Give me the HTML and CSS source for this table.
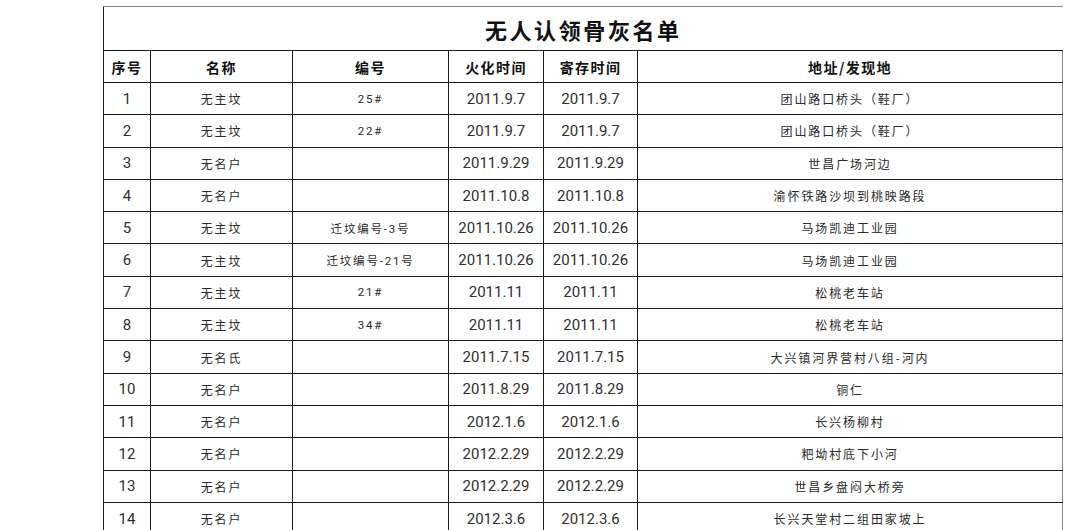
FILE: index.html
```html
<!DOCTYPE html>
<html lang="zh">
<head>
<meta charset="utf-8">
<title>无人认领骨灰名单</title>
<link rel="stylesheet" href="styles.css">
</head>
<body>
<div class="page">
<table class="sheet">
<colgroup>
<col class="c1"><col class="c2"><col class="c3"><col class="c4"><col class="c5"><col class="c6">
</colgroup>
<thead>
<tr class="title-row"><th colspan="6" class="title">无人认领骨灰名单</th></tr>
<tr class="head-row"><th>序号</th><th>名称</th><th>编号</th><th>火化时间</th><th>寄存时间</th><th>地址/发现地</th></tr>
</thead>
<tbody>
<tr><td class="num">1</td><td class="cn">无主坟</td><td class="code">25#</td><td class="num">2011.9.7</td><td class="num">2011.9.7</td><td class="cn">团山路口桥头（鞋厂）</td></tr>
<tr><td class="num">2</td><td class="cn">无主坟</td><td class="code">22#</td><td class="num">2011.9.7</td><td class="num">2011.9.7</td><td class="cn">团山路口桥头（鞋厂）</td></tr>
<tr><td class="num">3</td><td class="cn">无名户</td><td class="code"></td><td class="num">2011.9.29</td><td class="num">2011.9.29</td><td class="cn">世昌广场河边</td></tr>
<tr><td class="num">4</td><td class="cn">无名户</td><td class="code"></td><td class="num">2011.10.8</td><td class="num">2011.10.8</td><td class="cn">渝怀铁路沙坝到桃映路段</td></tr>
<tr><td class="num">5</td><td class="cn">无主坟</td><td class="code">迁坟编号-3号</td><td class="num">2011.10.26</td><td class="num">2011.10.26</td><td class="cn">马场凯迪工业园</td></tr>
<tr><td class="num">6</td><td class="cn">无主坟</td><td class="code">迁坟编号-21号</td><td class="num">2011.10.26</td><td class="num">2011.10.26</td><td class="cn">马场凯迪工业园</td></tr>
<tr><td class="num">7</td><td class="cn">无主坟</td><td class="code">21#</td><td class="num">2011.11</td><td class="num">2011.11</td><td class="cn">松桃老车站</td></tr>
<tr><td class="num">8</td><td class="cn">无主坟</td><td class="code">34#</td><td class="num">2011.11</td><td class="num">2011.11</td><td class="cn">松桃老车站</td></tr>
<tr><td class="num">9</td><td class="cn">无名氏</td><td class="code"></td><td class="num">2011.7.15</td><td class="num">2011.7.15</td><td class="cn">大兴镇河界营村八组-河内</td></tr>
<tr><td class="num">10</td><td class="cn">无名户</td><td class="code"></td><td class="num">2011.8.29</td><td class="num">2011.8.29</td><td class="cn">铜仁</td></tr>
<tr><td class="num">11</td><td class="cn">无名户</td><td class="code"></td><td class="num">2012.1.6</td><td class="num">2012.1.6</td><td class="cn">长兴杨柳村</td></tr>
<tr><td class="num">12</td><td class="cn">无名户</td><td class="code"></td><td class="num">2012.2.29</td><td class="num">2012.2.29</td><td class="cn">粑坳村底下小河</td></tr>
<tr><td class="num">13</td><td class="cn">无名户</td><td class="code"></td><td class="num">2012.2.29</td><td class="num">2012.2.29</td><td class="cn">世昌乡盘闷大桥旁</td></tr>
<tr><td class="num">14</td><td class="cn">无名户</td><td class="code"></td><td class="num">2012.3.6</td><td class="num">2012.3.6</td><td class="cn">长兴天堂村二组田家坡上</td></tr>
</tbody>
</table>
</div>
</body>
</html>
```
FILE: styles.css
```css
html, body {
  margin: 0;
  padding: 0;
  background: #ffffff;
}
.page {
  padding: 6px 0 0 103px;
}
.sheet {
  border-collapse: collapse;
  table-layout: fixed;
  width: 959px;
  color: #1c1c1c;
  font-family: Roboto, "Noto Sans CJK SC", sans-serif;
}
.c1 { width: 47px; }
.c2 { width: 142px; }
.c3 { width: 156px; }
.c4 { width: 95px; }
.c5 { width: 94px; }
.c6 { width: 425px; }
.sheet th, .sheet td {
  border: 1px solid #1a1a1a;
  padding: 0;
  text-align: center;
  vertical-align: middle;
  white-space: nowrap;
  overflow: hidden;
}
.sheet td:last-child, .sheet th:last-child {
  border-right-color: #8a8a8a;
}
.title-row th.title {
  height: 43px;
  border-top: 1px solid #8a8a8a;
  border-right: none;
  font-family: "Noto Sans CJK SC", sans-serif;
  font-size: 22px;
  font-weight: 700;
  letter-spacing: 2.6px;
  color: #111;
}
.head-row th {
  height: 31px;
  font-family: "Noto Sans CJK SC", sans-serif;
  font-size: 14px;
  font-weight: 700;
  letter-spacing: 1.4px;
  color: #111;
}
.sheet tbody td {
  height: 31.3px;
}
.num {
  font-family: Roboto, sans-serif;
  font-size: 15px;
  color: #303030;
}
.cn {
  font-family: "Noto Sans CJK SC", sans-serif;
  font-size: 12px;
  letter-spacing: 1.9px;
  color: #2a2a2a;
}
.code {
  font-family: Roboto, "Noto Sans CJK SC", sans-serif;
  font-size: 11.5px;
  letter-spacing: 1.8px;
  color: #2a2a2a;
}
```
